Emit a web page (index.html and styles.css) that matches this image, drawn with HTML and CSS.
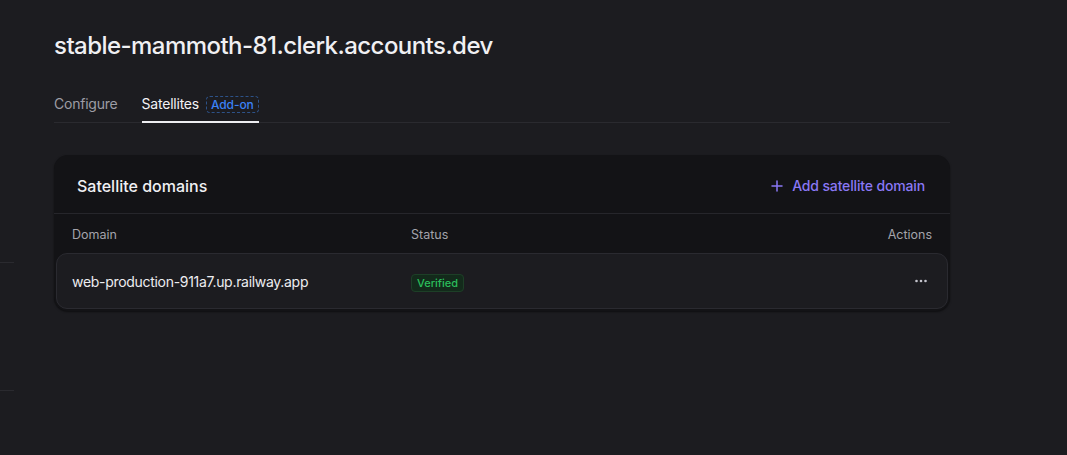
FILE: index.html
```html
<!DOCTYPE html>
<html lang="en">
<head>
<meta charset="utf-8">
<title>Satellites</title>
<link rel="stylesheet" href="styles.css">
</head>
<body>
<div class="page">
  <aside class="gutter">
    <span class="gutter-line"></span>
    <span class="gutter-line"></span>
  </aside>
  <main class="main">
    <h1 class="title">stable-mammoth-81.clerk.accounts.dev</h1>
    <nav class="tabs">
      <a class="tab">Configure</a>
      <a class="tab tab-active">Satellites <span class="addon">Add-on</span></a>
    </nav>
    <section class="card">
      <header class="card-head">
        <h2 class="card-title">Satellite domains</h2>
        <button class="add-btn">
          <svg width="12" height="12" viewBox="0 0 12 12" aria-hidden="true"><path d="M6 1v10M1 6h10" stroke="currentColor" stroke-width="1.5" stroke-linecap="round"/></svg>
          Add satellite domain
        </button>
      </header>
      <div class="table">
        <div class="thead">
          <span>Domain</span>
          <span>Status</span>
          <span class="right">Actions</span>
        </div>
        <div class="trow">
          <span class="domain">web-production-911a7.up.railway.app</span>
          <span><span class="verified">Verified</span></span>
          <span class="right">
            <button class="dots" aria-label="More actions">
              <svg width="12" height="4" viewBox="0 0 12 4"><circle cx="1.5" cy="2" r="1.3" fill="currentColor"/><circle cx="6" cy="2" r="1.3" fill="currentColor"/><circle cx="10.5" cy="2" r="1.3" fill="currentColor"/></svg>
            </button>
          </span>
        </div>
      </div>
    </section>
  </main>
</div>
</body>
</html>
```

FILE: styles.css
```css
* { box-sizing: border-box; }
html, body {
  margin: 0;
  height: 100%;
  background: #1c1c20;
  color: #ededf0;
  font-family: Inter, "Noto Sans", sans-serif;
  -webkit-font-smoothing: antialiased;
}
.page {
  display: flex;
  min-height: 100%;
}
.gutter {
  width: 14px;
  flex: none;
  display: flex;
  flex-direction: column;
  gap: 127px;
  padding-top: 262px;
}
.gutter-line {
  display: block;
  height: 1px;
  background: #2a2a2f;
}
.main {
  width: 896px;
  margin-left: 40px;
  padding-top: 30px;
}
.title {
  margin: 0;
  font-size: 24px;
  line-height: 32px;
  font-weight: 500;
  letter-spacing: -0.55px;
  color: #f0f0f3;
}
.tabs {
  display: flex;
  gap: 24px;
  margin-top: 32px;
  border-bottom: 1px solid #2a2a2f;
}
.tab {
  display: flex;
  align-items: center;
  gap: 7px;
  font-size: 14px;
  line-height: 20px;
  letter-spacing: -0.22px;
  padding-bottom: 7px;
  color: #9d9da5;
  margin-bottom: -1px;
  border-bottom: 2px solid transparent;
}
.tab-active {
  color: #f2f2f5;
  border-bottom-color: #ededf0;
}
.addon {
  font-size: 12px;
  line-height: 15px;
  font-weight: 500;
  letter-spacing: -0.1px;
  color: #3b82f6;
  border: 1px dashed #2d5288;
  border-radius: 4px;
  padding: 0 4px;
}
.card {
  margin-top: 32px;
  background: #131316;
  border-radius: 14px;
  padding: 0 2px 2px;
  box-shadow: 0 1px 2px rgba(0,0,0,0.5);
}
.card-head {
  height: 59px;
  display: flex;
  align-items: center;
  justify-content: space-between;
  padding: 3px 25px 0 23px;
  margin: 0 -2px;
  border-bottom: 1px solid #26262b;
}
.card-title {
  margin: 0;
  font-size: 16px;
  font-weight: 500;
  color: #f0f0f3;
}
.add-btn {
  display: flex;
  align-items: center;
  gap: 9px;
  background: none;
  border: 0;
  padding: 0;
  font-family: inherit;
  font-size: 14px;
  font-weight: 500;
  letter-spacing: -0.15px;
  color: #8a78f5;
}
.thead, .trow {
  display: grid;
  grid-template-columns: 339px 1fr auto;
  align-items: center;
  padding: 0 16px;
}
.thead {
  height: 39px;
  padding-top: 2px;
  font-size: 12.5px;
  color: #a3a3ab;
}
.right { justify-self: end; }
.trow {
  height: 56px;
  padding: 0 15px;
  background: #1c1c20;
  border: 1px solid #2a2a30;
  border-radius: 11px;
}
.domain {
  font-size: 14px;
  letter-spacing: -0.3px;
  color: #ededf0;
}
.verified {
  display: inline-block;
  font-size: 11px;
  font-weight: 500;
  line-height: 16px;
  padding: 0 5px;
  color: #2bbd5c;
  background: #132a1b;
  border: 1px solid #1d3f27;
  border-radius: 4px;
}
.dots {
  width: 22px;
  height: 22px;
  display: flex;
  align-items: center;
  justify-content: center;
  background: none;
  border: 0;
  padding: 0;
  color: #c4c4cc;
}
```
